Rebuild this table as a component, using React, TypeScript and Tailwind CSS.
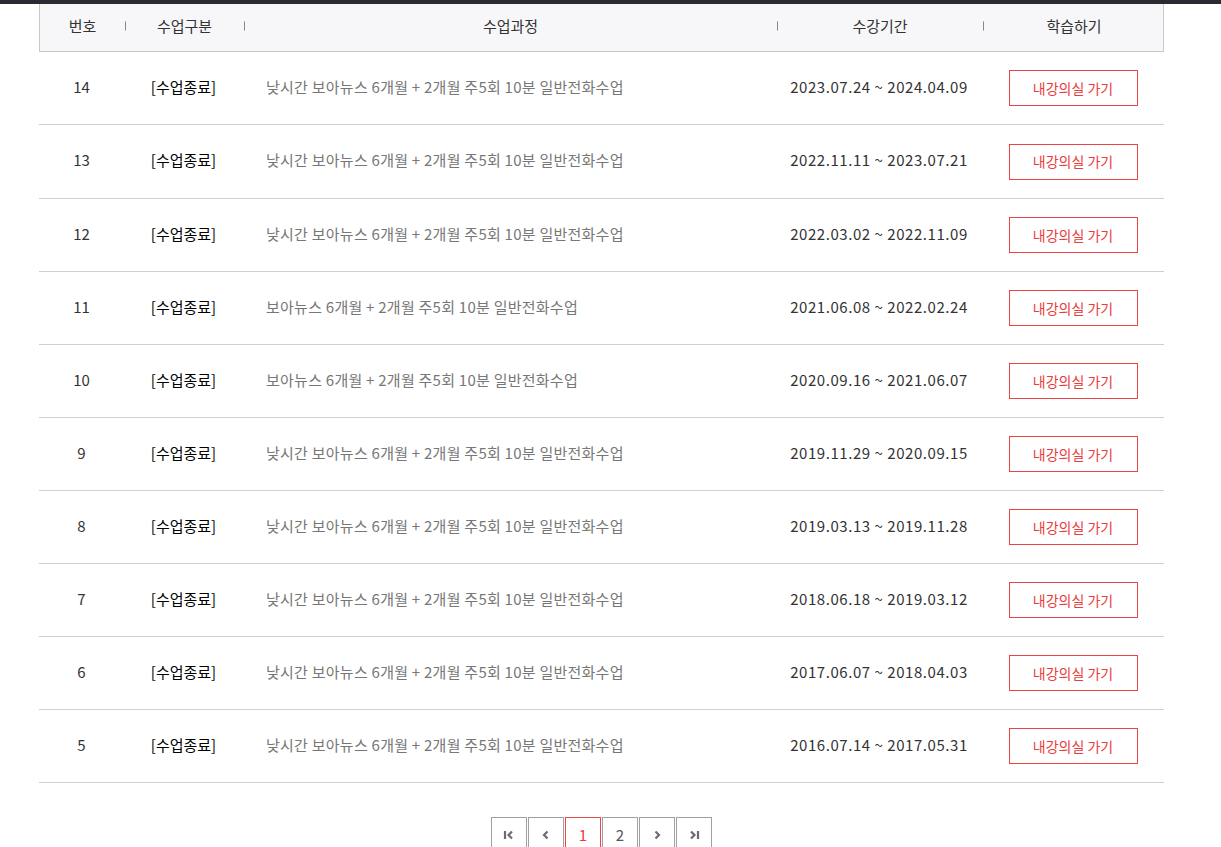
import React from "react";

const rows = [
  { no: 14, title: "낮시간 보아뉴스 6개월 + 2개월 주5회 10분 일반전화수업", period: "2023.07.24 ~ 2024.04.09" },
  { no: 13, title: "낮시간 보아뉴스 6개월 + 2개월 주5회 10분 일반전화수업", period: "2022.11.11 ~ 2023.07.21" },
  { no: 12, title: "낮시간 보아뉴스 6개월 + 2개월 주5회 10분 일반전화수업", period: "2022.03.02 ~ 2022.11.09" },
  { no: 11, title: "보아뉴스 6개월 + 2개월 주5회 10분 일반전화수업", period: "2021.06.08 ~ 2022.02.24" },
  { no: 10, title: "보아뉴스 6개월 + 2개월 주5회 10분 일반전화수업", period: "2020.09.16 ~ 2021.06.07" },
  { no: 9, title: "낮시간 보아뉴스 6개월 + 2개월 주5회 10분 일반전화수업", period: "2019.11.29 ~ 2020.09.15" },
  { no: 8, title: "낮시간 보아뉴스 6개월 + 2개월 주5회 10분 일반전화수업", period: "2019.03.13 ~ 2019.11.28" },
  { no: 7, title: "낮시간 보아뉴스 6개월 + 2개월 주5회 10분 일반전화수업", period: "2018.06.18 ~ 2019.03.12" },
  { no: 6, title: "낮시간 보아뉴스 6개월 + 2개월 주5회 10분 일반전화수업", period: "2017.06.07 ~ 2018.04.03" },
  { no: 5, title: "낮시간 보아뉴스 6개월 + 2개월 주5회 10분 일반전화수업", period: "2016.07.14 ~ 2017.05.31" },
];

const cols = "grid grid-cols-[85px_119px_533px_206px_182px]";
const sep =
  "relative before:absolute before:left-0 before:top-1/2 before:-translate-y-1/2 before:h-[9px] before:w-px before:bg-[#888] before:content-['']";

function PageIcon({ kind }: { kind: "first" | "prev" | "next" | "last" }) {
  return (
    <svg width="12" height="10" viewBox="0 0 12 10" fill="none" stroke="#6b6b73" strokeWidth="2.2">
      {kind === "first" && (
        <>
          <path d="M2 1v8" />
          <path d="M9 1.5L5.5 5 9 8.5" />
        </>
      )}
      {kind === "prev" && <path d="M7.5 1.5L4 5l3.5 3.5" />}
      {kind === "next" && <path d="M4.5 1.5L8 5 4.5 8.5" />}
      {kind === "last" && (
        <>
          <path d="M3 1.5L6.5 5 3 8.5" />
          <path d="M10 1v8" />
        </>
      )}
    </svg>
  );
}

export default function App() {
  return (
    <div
      className="w-full min-h-[847px] bg-white text-[15px]"
      style={{ fontFamily: '"Noto Sans CJK KR", "Noto Sans", sans-serif' }}
    >
      <div className="h-[4px] bg-[#2b2a33]" />
      <div className="ml-[39px] w-[1125px]">
        <div className={`${cols} h-[48px] pb-[3px] bg-[#f7f7f9] border-x border-b border-[#c8c8c8] text-[#333] items-center`}>
          <div className="flex items-center justify-center h-full">번호</div>
          <div className={`flex items-center justify-center h-full ${sep}`}>수업구분</div>
          <div className={`flex items-center justify-center h-full ${sep}`}>수업과정</div>
          <div className={`flex items-center justify-center h-full ${sep}`}>수강기간</div>
          <div className={`flex items-center justify-center h-full ${sep}`}>학습하기</div>
        </div>
        {rows.map((r, i) => (
          <div
            key={r.no}
            className={`${cols} ${i === 1 ? "h-[74px]" : "h-[73px]"} border-b border-[#cfcfcf] items-center`}
          >
            <div className="text-center text-[#333] pb-[2px]">{r.no}</div>
            <div className="text-center text-black pb-[2px]">[수업종료]</div>
            <div className="pl-[23px] text-[#777] tracking-[0.25px] pb-[2px]">{r.title}</div>
            <div className="text-center text-[#333] tracking-[0.55px] pb-[2px]">{r.period}</div>
            <div className="flex justify-center">
              <button className="w-[129px] h-[36px] border border-[#ea4444] text-[#ea3c3c] text-[14px] bg-white">
                내강의실 가기
              </button>
            </div>
          </div>
        ))}
        <div className="flex justify-center gap-px mt-[34px]">
          <div className="w-[36px] h-[36px] border border-[#a0a0a0] flex items-center justify-center">
            <PageIcon kind="first" />
          </div>
          <div className="w-[36px] h-[36px] border border-[#a0a0a0] flex items-center justify-center">
            <PageIcon kind="prev" />
          </div>
          <div className="w-[36px] h-[36px] border border-[#e84a4a] flex items-center justify-center text-[#ea3c3c]">
            1
          </div>
          <div className="w-[36px] h-[36px] border border-[#a0a0a0] flex items-center justify-center text-[#555]">
            2
          </div>
          <div className="w-[36px] h-[36px] border border-[#a0a0a0] flex items-center justify-center">
            <PageIcon kind="next" />
          </div>
          <div className="w-[36px] h-[36px] border border-[#a0a0a0] flex items-center justify-center">
            <PageIcon kind="last" />
          </div>
        </div>
      </div>
    </div>
  );
}
